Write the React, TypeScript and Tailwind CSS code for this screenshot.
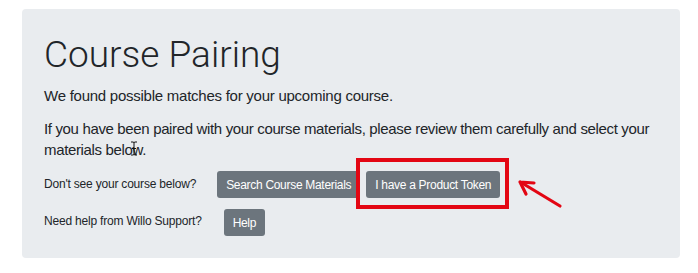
import React from 'react'

const Btn = ({ children }: { children: React.ReactNode }) => (
  <button className="h-[27px] px-[9px] bg-[#6c757d] text-white text-[12px] tracking-[-0.3px] leading-none rounded-[3px]">
    {children}
  </button>
)

export default function App() {
  return (
    <div
      className="w-[698px] h-[273px] bg-white pt-[9px] pl-[22px] pr-[18px]"
      style={{ fontFamily: '"Liberation Sans", Arial, sans-serif' }}
    >
      <div className="relative h-[249px] bg-[#e9ecef] rounded-[4px] px-[22px] pt-[26px] text-[#212529]">
        <h1
          className="text-[37px] font-light leading-[40px]"
          style={{ fontFamily: 'Roboto, "Liberation Sans", sans-serif' }}
        >
          Course Pairing
        </h1>
        <p className="mt-[10px] text-[15px] leading-[22px] tracking-[-0.25px]">
          We found possible matches for your upcoming course.
        </p>
        <p className="mt-[11px] text-[15px] leading-[21px] tracking-[-0.35px] w-[610px]">
          If you have been paired with your course materials, please review them carefully and select your
          materials below.
        </p>

        <div className="mt-[11px] flex items-center gap-[21px]">
          <span className="text-[12px] tracking-[-0.2px] -mt-[2px]">Don't see your course below?</span>
          <div className="flex gap-[6px]">
            <Btn>Search Course Materials</Btn>
            <Btn>I have a Product Token</Btn>
          </div>
        </div>
        <div className="mt-[11px] flex items-center gap-[22px]">
          <span className="text-[12px] tracking-[-0.2px] -mt-[4px]">Need help from Willo Support?</span>
          <Btn>Help</Btn>
        </div>

        {/* annotation: red box + arrow */}
        <div className="absolute left-[334px] top-[149px] w-[153px] h-[51px] border-[4px] border-[#e30613]" />
        <svg className="absolute left-[494px] top-[170px]" width="50" height="32" viewBox="0 0 50 32">
          <path d="M44 27 L6 4" stroke="#e30613" strokeWidth="3.2" strokeLinecap="round" />
          <path d="M4 3 L18 4 M4 3 L10 15" stroke="#e30613" strokeWidth="3.2" strokeLinecap="round" />
        </svg>

        {/* text cursor */}
        <svg className="absolute left-[108px] top-[132px]" width="8" height="15" viewBox="0 0 8 15">
          <path d="M1 1 H3 Q4 1 4 2 V13 Q4 14 3 14 H1 M7 1 H5 Q4 1 4 2 M4 13 Q4 14 5 14 H7 M2 7.5 H6" stroke="#111" strokeWidth="1" fill="none" />
        </svg>
      </div>
    </div>
  )
}
